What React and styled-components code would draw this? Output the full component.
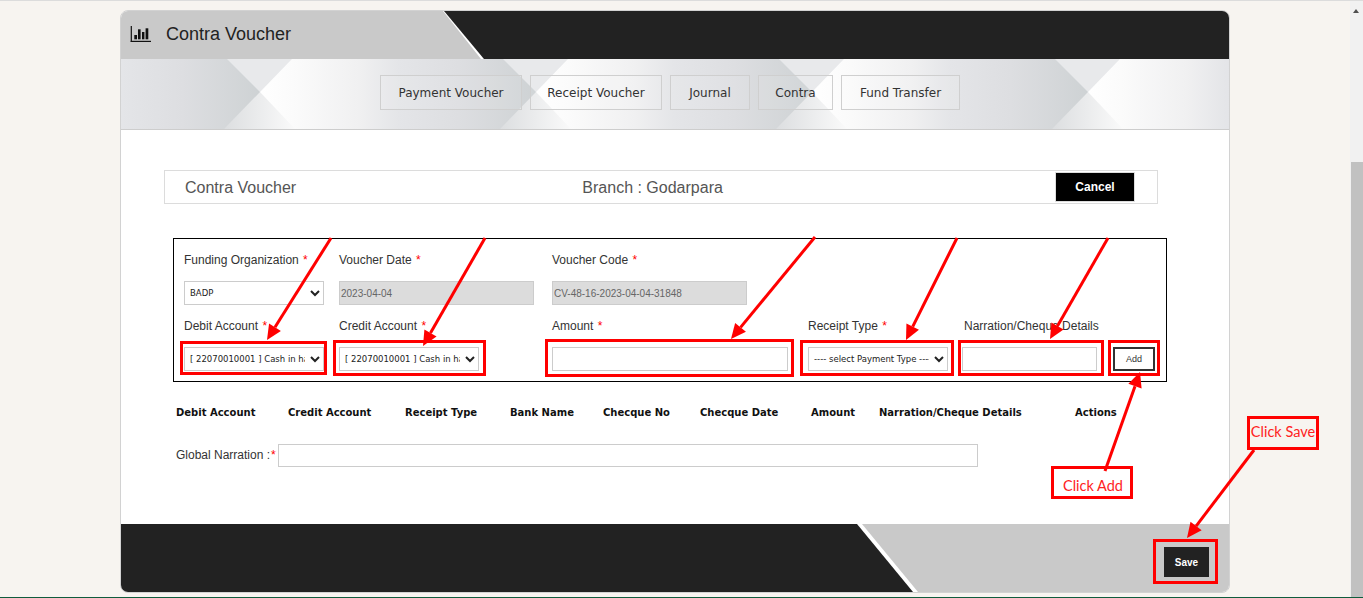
import React from "react"
import styled, { createGlobalStyle } from "styled-components"

const GlobalStyle = createGlobalStyle`
  html, body {
    margin: 0;
    padding: 0;
    height: 598px;
    overflow: hidden;
    background: #f7f4f0;
  }
  * {
    box-sizing: border-box;
  }
`

const Page = styled.div`
  position: relative;
  width: 1363px;
  height: 598px;
  padding: 9px 133px 0 120px;
  border-top: 1px solid #dcdcdc;
  border-bottom: 1px solid #0f5c3c;
  font-family: "Liberation Sans", Arial, sans-serif;
  overflow: hidden;
`

const Scrollbar = styled.div`
  position: absolute;
  top: -1px;
  right: 0;
  width: 13px;
  height: 600px;
  background: #f1f1f1;
  &::after {
    content: "";
    position: absolute;
    top: 162px;
    left: 1px;
    right: 0;
    bottom: 0;
    background: #c1c1c1;
  }
`

const ScrollArrow = styled.div`
  position: absolute;
  top: 9px;
  left: 3px;
  border-left: 3.5px solid transparent;
  border-right: 3.5px solid transparent;
  border-bottom: 4px solid #505050;
`

const Card = styled.div`
  width: 1110px;
  height: 583px;
  background: #fff;
  border: 1px solid #d2d2d2;
  border-radius: 8px;
  overflow: hidden;
  display: flex;
  flex-direction: column;
`

const Header = styled.div`
  position: relative;
  height: 48px;
  flex: none;
  background: #c9c9c9;
  display: flex;
  align-items: center;
  gap: 15px;
  padding: 0 0 2px 9px;
  color: #222;
  font-size: 18px;
  &::after {
    content: "";
    position: absolute;
    inset: 0;
    background: #222;
    clip-path: polygon(323px 0, 100% 0, 100% 100%, 363px 100%);
  }
  &::before {
    content: "";
    position: absolute;
    inset: 0;
    background: #fff;
    clip-path: polygon(322px 0, 326px 0, 363px 100%, 360px 100%);
  }
`

const NavBand = styled.div`
  position: relative;
  height: 71px;
  flex: none;
  border-bottom: 1px solid #cdcdcd;
  display: flex;
  align-items: flex-start;
  justify-content: center;
  gap: 8px;
  padding: 16px 10px 0 0;
  overflow: hidden;
`

const BandArt = styled.svg`
  position: absolute;
  left: 0;
  top: 0;
  width: 1108px;
  height: 70px;
`

const NavButton = styled.div`
  position: relative;
  width: ${props => props.$width}px;
  height: 35px;
  border: 1px solid #cfcfcf;
  background: rgba(255, 255, 255, 0.08);
  color: #333;
  font-family: "DejaVu Sans", Verdana, sans-serif;
  font-size: 12px;
  line-height: 34px;
  text-align: center;
`

const Content = styled.div`
  flex: 1;
  padding: 40px 71px 0 43px;
`

const TitleBar = styled.div`
  height: 34px;
  width: 994px;
  border: 1px solid #dcdcdc;
  display: flex;
  align-items: center;
  justify-content: space-between;
  padding: 0 22px 0 20px;
  color: #555;
  font-size: 16px;
`

const TitleText = styled.span`
  padding-top: 2px;
`

const BranchName = styled(TitleText)`
  position: relative;
  left: -23px;
`

const CancelButton = styled.button`
  width: 80px;
  height: 30px;
  background: #000;
  border: 1px solid #ddd;
  color: #fff;
  font-family: inherit;
  font-size: 12px;
  font-weight: bold;
`

const FormBox = styled.div`
  margin: 34px 0 0 9px;
  width: 994px;
  height: 144px;
  border: 1px solid #000;
  padding: 14px 0 0 10px;
  display: grid;
  grid-template-columns: 155px 213px 256px 156px 150px 42px;
  grid-template-rows: 14px 24px 14px 24px;
  row-gap: 14px;
  align-items: center;
`

const FieldLabel = styled.label`
  font-size: 12px;
  color: #333;
  white-space: nowrap;
  line-height: 14px;
`

const Star = styled.span`
  color: #f00;
  margin-left: 1px;
`

const Select = styled.select`
  width: 140px;
  height: 24px;
  background: #fff;
  border: 1px solid #ccc;
  border-radius: 0;
  color: #222;
  font-family: "DejaVu Sans", Verdana, sans-serif;
  font-size: 8.5px;
  padding: 0 2px 0 1px;
  outline: none;
`

const TextInput = styled.input`
  width: ${props => props.$width}px;
  height: ${props => props.$height || 24}px;
  margin-left: ${props => props.$shift || 0}px;
  border: 1px solid #ccc;
  background: ${props => (props.disabled ? "#dcdcdc" : "#fff")};
  color: #666;
  font-family: "Liberation Sans", Arial, sans-serif;
  font-size: 10px;
  padding: 0 1px;
  outline: none;
  opacity: 1;
`

const AddButton = styled.button`
  width: 42px;
  height: 24px;
  margin-left: -1px;
  background: #fff;
  border: 2px solid #333;
  color: #333;
  font-family: inherit;
  font-size: 9px;
  padding: 0;
`

const TableHead = styled.div`
  display: grid;
  grid-template-columns: 112px 117px 105px 93px 97px 111px 68px 196px 60px;
  margin: 24px 0 0 12px;
  font-family: "DejaVu Sans", Verdana, sans-serif;
  font-size: 10px;
  font-weight: bold;
  color: #111;
  line-height: 13px;
`

const NarrationRow = styled.div`
  display: flex;
  align-items: center;
  margin: 25px 0 0 12px;
  font-size: 12px;
  color: #333;
`

const NarrationLabel = styled.span`
  width: 102px;
  flex: none;
  padding-bottom: 2px;
  white-space: nowrap;
`

const Footer = styled.div`
  position: relative;
  height: 68px;
  flex: none;
  background: #c9c9c9;
  &::before {
    content: "";
    position: absolute;
    inset: 0;
    background: #fff;
    clip-path: polygon(0 0, 741px 0, 797px 100%, 0 100%);
  }
  &::after {
    content: "";
    position: absolute;
    inset: 0;
    background: #222;
    clip-path: polygon(0 0, 736px 0, 792px 100%, 0 100%);
  }
`

const SaveButton = styled.button`
  position: absolute;
  z-index: 1;
  right: 20px;
  top: 23px;
  width: 45px;
  height: 30px;
  background: #222;
  border: none;
  color: #fff;
  font-family: inherit;
  font-size: 10px;
  font-weight: bold;
  padding: 0;
`

// tutorial markup drawn over the screenshot
const Callout = styled.div`
  position: absolute;
  left: ${props => props.$x}px;
  top: ${props => props.$y}px;
  width: ${props => props.$w}px;
  height: ${props => props.$h}px;
  border: 3px solid #f00;
`

const CalloutText = styled(Callout)`
  display: flex;
  align-items: center;
  justify-content: center;
  padding: ${props => props.$pad || "0"};
  color: #f22;
  font-family: Lato, "Liberation Sans", sans-serif;
  font-size: 14.5px;
  white-space: nowrap;
  background: ${props => props.$bg || "transparent"};
`

const ArrowLayer = styled.svg`
  position: absolute;
  left: 0;
  top: -1px;
  width: 1363px;
  height: 598px;
  pointer-events: none;
`

const tileStarts = [-137, 139, 415, 691, 967]
const navItems = [
  ["Payment Voucher", 142],
  ["Receipt Voucher", 132],
  ["Journal", 80],
  ["Contra", 75],
  ["Fund Transfer", 119],
]
const tableCols = [
  "Debit Account",
  "Credit Account",
  "Receipt Type",
  "Bank Name",
  "Checque No",
  "Checque Date",
  "Amount",
  "Narration/Cheque Details",
  "Actions",
]

const boxes = [
  [180, 341, 147, 34],
  [333, 340, 153, 36],
  [545, 339, 249, 38],
  [800, 340, 154, 36],
  [958, 340, 146, 36],
  [1108, 340, 52, 36],
  [1153, 539, 65, 45],
]

const arrows = [
  [331, 238, 267, 340],
  [485, 238, 423, 346],
  [815, 237, 731, 339],
  [957, 238, 906, 340],
  [1108, 238, 1050, 339],
  [1105, 471, 1140, 372],
  [1254, 450, 1187, 538],
]

function Arrow({ x1, y1, x2, y2 }) {
  const angle = Math.atan2(y2 - y1, x2 - x1)
  const back = 15
  const spread = 7
  const bx = x2 - back * Math.cos(angle)
  const by = y2 - back * Math.sin(angle)
  const nx = -Math.sin(angle) * spread
  const ny = Math.cos(angle) * spread
  return (
    <g>
      <line x1={x1} y1={y1} x2={bx} y2={by} stroke="#f00" strokeWidth="3" />
      <polygon points={`${x2},${y2} ${bx + nx},${by + ny} ${bx - nx},${by - ny}`} fill="#f00" />
    </g>
  )
}

function StatsIcon() {
  return (
    <svg width="21" height="16" viewBox="0 0 21 16" fill="#111">
      <rect x="0.7" y="0" width="1.2" height="16" />
      <rect x="0.7" y="14.8" width="20.3" height="1.2" />
      <rect x="4.3" y="9" width="2.7" height="4.3" />
      <rect x="8" y="3.3" width="2.6" height="10" />
      <rect x="12" y="6" width="2.4" height="7.3" />
      <rect x="15.6" y="2.3" width="2.7" height="11" />
    </svg>
  )
}

function NavArt() {
  return (
    <BandArt viewBox="0 0 1108 70" preserveAspectRatio="none">
      <defs>
        <linearGradient id="tile" x1="0" x2="1" y1="0" y2="0">
          <stop offset="0" stopColor="#ffffff" />
          <stop offset="0.12" stopColor="#fbfbfb" />
          <stop offset="0.36" stopColor="#f0f0f1" />
          <stop offset="0.5" stopColor="#e4e5e8" />
          <stop offset="0.72" stopColor="#dddee1" />
          <stop offset="1" stopColor="#ced2d4" />
        </linearGradient>
        <linearGradient id="wedge" x1="0" x2="1" y1="0" y2="0">
          <stop offset="0" stopColor="#dcdee0" />
          <stop offset="1" stopColor="#fafafa" />
        </linearGradient>
      </defs>
      {tileStarts.map(c => (
        <rect key={c} x={c} y="0" width="276" height="70" fill="url(#tile)" />
      ))}
      {tileStarts.map(c => (
        <g key={c}>
          <polygon points={`${c - 33},0 ${c + 32},0 ${c},33`} fill="#e8e9eb" />
          <polygon points={`${c - 36},70 ${c + 35},70 ${c},33`} fill="url(#wedge)" />
        </g>
      ))}
    </BandArt>
  )
}

export default function App() {
  return (
    <Page>
      <GlobalStyle />
      <Card>
        <Header>
          <StatsIcon />
          <span>Contra Voucher</span>
        </Header>
        <NavBand>
          <NavArt />
          {navItems.map(([item, width]) => (
            <NavButton key={item} $width={width}>{item}</NavButton>
          ))}
        </NavBand>
        <Content>
          <TitleBar>
            <TitleText>Contra Voucher</TitleText>
            <BranchName>Branch : Godarpara</BranchName>
            <CancelButton>Cancel</CancelButton>
          </TitleBar>
          <FormBox>
            <FieldLabel>Funding Organization <Star>*</Star></FieldLabel>
            <FieldLabel>Voucher Date <Star>*</Star></FieldLabel>
            <FieldLabel>Voucher Code <Star>*</Star></FieldLabel>
            <span />
            <span />
            <span />
            <Select defaultValue="BADP">
              <option>BADP</option>
            </Select>
            <TextInput $width={195} disabled value="2023-04-04" readOnly />
            <TextInput $width={195} disabled value="CV-48-16-2023-04-04-31848" readOnly />
            <span />
            <span />
            <span />
            <FieldLabel>Debit Account <Star>*</Star></FieldLabel>
            <FieldLabel>Credit Account <Star>*</Star></FieldLabel>
            <FieldLabel>Amount <Star>*</Star></FieldLabel>
            <FieldLabel>Receipt Type <Star>*</Star></FieldLabel>
            <FieldLabel>Narration/Cheque Details</FieldLabel>
            <span />
            <Select>
              <option>[ 22070010001 ] Cash in hand</option>
            </Select>
            <Select>
              <option>[ 22070010001 ] Cash in hand</option>
            </Select>
            <TextInput $width={236} />
            <Select>
              <option>---- select Payment Type ----</option>
            </Select>
            <TextInput $width={135} $shift={-2} />
            <AddButton>Add</AddButton>
          </FormBox>
          <TableHead>
            {tableCols.map(col => (
              <span key={col}>{col}</span>
            ))}
          </TableHead>
          <NarrationRow>
            <NarrationLabel>Global Narration :<Star>*</Star></NarrationLabel>
            <TextInput $width={700} $height={23} />
          </NarrationRow>
        </Content>
        <Footer>
          <SaveButton>Save</SaveButton>
        </Footer>
      </Card>
      <Scrollbar>
        <ScrollArrow />
      </Scrollbar>
      {boxes.map(([x, y, w, h]) => (
        <Callout key={`${x}-${y}`} $x={x} $y={y - 1} $w={w} $h={h} />
      ))}
      <CalloutText $x={1051} $y={465} $w={82} $h={33} $pad="5px 0 0 2px" $bg="#fff">Click Add</CalloutText>
      <CalloutText $x={1247} $y={415} $w={72} $h={34} $pad="0 0 3px 0">Click Save</CalloutText>
      <ArrowLayer viewBox="0 0 1363 598">
        {arrows.map(([x1, y1, x2, y2]) => (
          <Arrow key={`${x1}-${y1}`} x1={x1} y1={y1} x2={x2} y2={y2} />
        ))}
      </ArrowLayer>
    </Page>
  )
}
